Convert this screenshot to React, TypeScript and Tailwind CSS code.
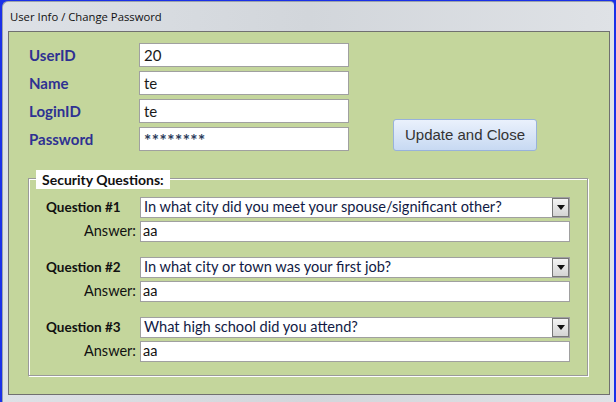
import React from 'react';

const font = { fontFamily: 'Lato, "Open Sans", sans-serif' };

function Field({ label, value }: { label: string; value: React.ReactNode }) {
  return (
    <div className="flex items-center h-[24px]">
      <div className="w-[110px] text-[15px] font-bold text-[#2e3192]">{label}</div>
      <div className="w-[210px] h-[24px] bg-white border border-[#a0a0a0] px-[4px] flex items-center text-[15px] text-[#1a1a1a]">
        {value}
      </div>
    </div>
  );
}

function Question({ n, question, answer }: { n: number; question: string; answer: string }) {
  return (
    <div className="flex flex-col gap-[4px]">
      <div className="flex items-center h-[20px]">
        <div className="w-[111px] pl-[17px] text-[13.5px] font-bold text-[#111]">Question #{n}</div>
        <div className="w-[430px] h-[21px] bg-white border border-[#a0a0a0] flex items-center justify-between">
          <span className="pl-[3px] text-[14.6px] text-[#111a44] leading-none">{question}</span>
          <span className="w-[17px] h-[19px] border border-[#777] bg-gradient-to-b from-[#f4f4f4] to-[#d4d4d4] flex items-center justify-center">
            <svg width="8" height="5" viewBox="0 0 8 5">
              <path d="M0 0h8L4 5z" fill="#111" />
            </svg>
          </span>
        </div>
      </div>
      <div className="flex items-center h-[20px]">
        <div className="w-[107px] text-right text-[14.5px] text-[#111]">Answer:</div>
        <div className="ml-[4px] w-[430px] h-[21px] bg-white border border-[#a0a0a0] pl-[2px] flex items-center text-[14.5px] text-[#111]">
          {answer}
        </div>
      </div>
    </div>
  );
}

export default function App() {
  return (
    <div className="w-[616px] h-[402px] bg-[#1a30e8] pl-[2px] pr-[2px] pt-[1px] overflow-hidden" style={font}>
      <div className="h-[410px] rounded-tl-[6px] rounded-tr-[4px] bg-gradient-to-r from-[#dde1e6] via-[#d2d6db] to-[#dfe2e6] border-l border-t border-[#9aa2ab] flex flex-col">
        <div
          className="h-[29px] pl-[7px] pt-[7px] text-[11.3px] text-[#111]"
          style={{ fontFamily: '"Open Sans", "Noto Sans", sans-serif' }}
        >
          User Info / Change Password
        </div>
        <div className="ml-[5px] mr-[4px] h-[364px] bg-[#c4d69c] border border-[#707070] flex flex-col">
          <div className="flex items-end pl-[20px] pt-[11px]">
            <div className="flex flex-col gap-[4px]">
              <Field label="UserID" value="20" />
              <Field label="Name" value="te" />
              <Field label="LoginID" value="te" />
              <Field
                label="Password"
                value={<span className="text-[17px] font-bold tracking-[0.5px] text-[#2a3a5a] pt-[4px]">********</span>}
              />
            </div>
            <button
              className="ml-[44px] w-[144px] h-[32px] rounded-[3px] border border-[#98b2db] bg-gradient-to-b from-[#eaf1fc] to-[#c7d9f2] text-[15px] text-[#333]"
              style={{ fontFamily: '"Liberation Sans", Arial, sans-serif' }}
            >
              Update and Close
            </button>
          </div>
          <div className="relative ml-[19px] mt-[27px] w-[560px] h-[198px] border border-[#9a9a9a] shadow-[inset_1px_1px_0_#fff,1px_1px_0_#fff] pt-[18px] flex flex-col gap-[16px]">
            <div className="absolute left-[7px] top-[-9px] h-[19px] bg-white px-[6px] text-[14px] font-bold text-[#111] leading-[19px]">
              Security Questions:
            </div>
            <Question n={1} question="In what city did you meet your spouse/significant other?" answer="aa" />
            <Question n={2} question="In what city or town was your first job?" answer="aa" />
            <Question n={3} question="What high school did you attend?" answer="aa" />
          </div>
        </div>
      </div>
    </div>
  );
}
